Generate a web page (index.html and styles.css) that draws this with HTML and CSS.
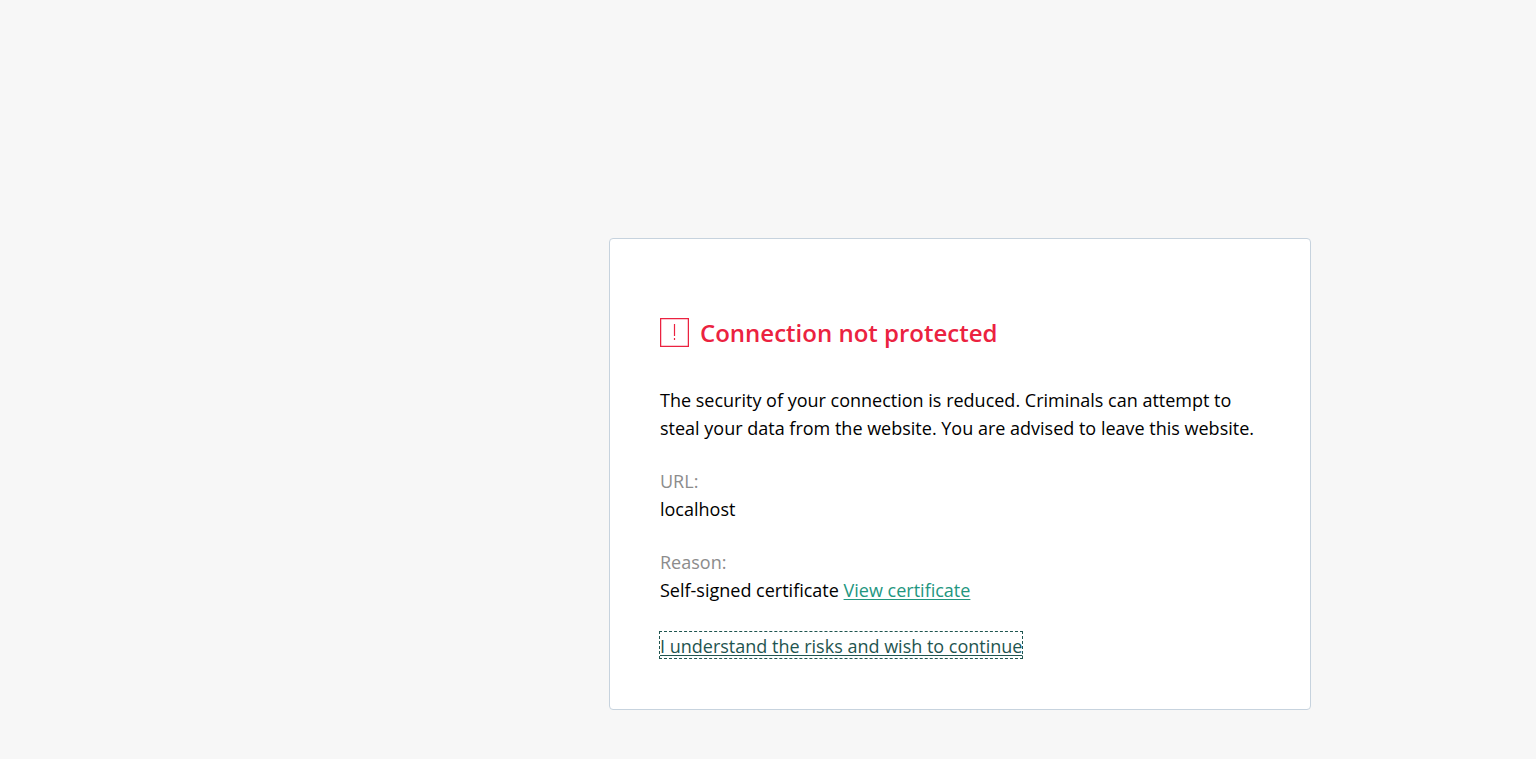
FILE: index.html
```html
<!DOCTYPE html>
<html lang="en">
<head>
<meta charset="utf-8">
<title>Connection not protected</title>
<link rel="stylesheet" href="styles.css">
</head>
<body>
<main class="card">
  <header class="card-header">
    <svg class="warning-icon" viewBox="0 0 29 29" aria-hidden="true">
      <rect x="0.6" y="0.6" width="27.8" height="27.8" fill="none" stroke="currentColor" stroke-width="1.3"/>
      <path d="M14.5 6v12M14.5 20v2" fill="none" stroke="currentColor" stroke-width="1.2"/>
    </svg>
    <h1 class="title">Connection not protected</h1>
  </header>
  <p class="message">The security of your connection is reduced. Criminals can attempt to steal your data from the website. You are advised to leave this website.</p>
  <dl class="details">
    <div><dt>URL:</dt><dd>localhost</dd></div>
    <div><dt>Reason:</dt><dd>Self-signed certificate <a class="link" href="#certificate">View certificate</a></dd></div>
  </dl>
  <a class="link link-focused" href="#continue">I understand the risks and wish to continue</a>
</main>
</body>
</html>
```
FILE: styles.css
```css
* { box-sizing: border-box; }
body {
  margin: 0;
  padding: 238px 16px 48px;
  background: #f7f7f7;
  color: #000;
  font: 18px/28px "Open Sans", "Noto Sans", sans-serif;
}
.card {
  width: 100%;
  max-width: 702px;
  margin-left: min(593px, 40vw);
  padding: 78px 50px 51px;
  border: 1px solid #c7d3de;
  border-radius: 4px;
  background: #fff;
}
.card-header {
  display: flex;
  align-items: center;
  gap: 11px;
  margin-bottom: 38px;
  color: #eb2240;
}
.warning-icon { width: 29px; height: 29px; flex: none; }
.title { margin: 0; font-size: 24px; line-height: 31px; font-weight: 600; }
.message { margin: 0 0 25px; }
.details { margin: 0 0 28px; display: grid; gap: 25px; }
dt { color: #8c8c8c; }
dd { margin: 0; }
.link { color: #23967f; text-underline-offset: 2px; }
.link-focused {
  display: block;
  width: fit-content;
  padding-top: 2px;
  line-height: 24px;
  color: #1f5550;
  outline: 1px dashed #1f5550;
}
```
